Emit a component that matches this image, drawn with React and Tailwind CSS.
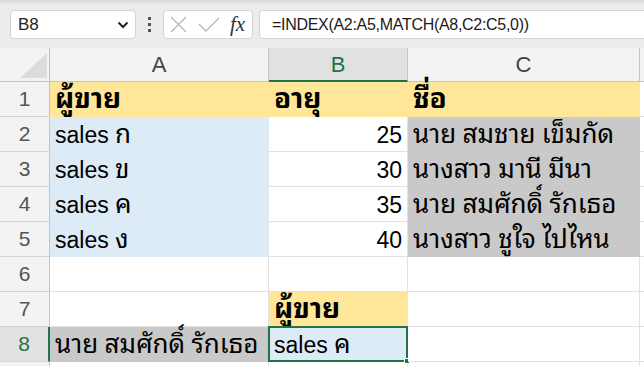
import React from "react";

const FONT = {
  fontFamily:
    '"Liberation Sans", "Noto Sans Thai Looped", Tahoma, Loma, Garuda, "Noto Serif Thai", "Noto Sans Thai", "Noto Sans", sans-serif',
};

const fills = {
  yellow: "bg-[#ffe699] border-[#ffe699]",
  blue: "bg-[#ddebf7] border-[#ddebf7]",
  gray: "bg-[#c9c9c9] border-[#c9c9c9]",
  none: "bg-white border-[#e1e1e1]",
};

const rows = [
  [
    { text: "ผู้ขาย", fill: "yellow", bold: true },
    { text: "อายุ", fill: "yellow", bold: true },
    { text: "ชื่อ", fill: "yellow", bold: true },
  ],
  [
    { text: "sales ก", fill: "blue" },
    { text: "25", right: true },
    { text: "นาย สมชาย เข็มกัด", fill: "gray" },
  ],
  [
    { text: "sales ข", fill: "blue" },
    { text: "30", right: true },
    { text: "นางสาว มานี มีนา", fill: "gray" },
  ],
  [
    { text: "sales ค", fill: "blue" },
    { text: "35", right: true },
    { text: "นาย สมศักดิ์ รักเธอ", fill: "gray" },
  ],
  [
    { text: "sales ง", fill: "blue" },
    { text: "40", right: true },
    { text: "นางสาว ชูใจ ไปไหน", fill: "gray" },
  ],
  [{}, {}, {}],
  [{}, { text: "ผู้ขาย", fill: "yellow", bold: true }, {}],
  [
    { text: "นาย สมศักดิ์ รักเธอ", fill: "gray" },
    { text: "sales ค", fill: "blue", selected: true },
    {},
  ],
];

// Thai runs get a slightly bigger size so they match Excel's Tahoma rendering
function splitThai(text, bold) {
  if (!text) return null;
  return text.split(/([\u0E00-\u0E7F]+)/).map((part, k) =>
    /[\u0E00-\u0E7F]/.test(part) ? (
      <span key={k} className={bold ? "text-[28px] leading-[26px]" : "text-[26px] leading-[26px]"}>
        {part}
      </span>
    ) : (
      part
    )
  );
}

function Cell({ cell }) {
  const fill = fills[cell.fill || "none"];
  return (
    <div
      className={`relative flex items-end border-r border-b px-[5px] pb-[3px] text-[23px] leading-[26px] text-black whitespace-nowrap ${fill} ${
        cell.right ? "justify-end" : "justify-start"
      } ${cell.bold ? "font-bold" : "font-normal"}`}
    >
      <span>{splitThai(cell.text, cell.bold)}</span>
      {cell.selected && (
        <>
          <div className="absolute -left-px -top-px -right-px -bottom-px border-2 border-[#217346]" />
          <div className="absolute -right-[3px] -bottom-[3px] h-[6px] w-[6px] bg-[#217346] border border-white" />
        </>
      )}
    </div>
  );
}

function Toolbar() {
  return (
    <div className="flex h-[44px] items-start pt-[6px] pl-[10px] bg-[#ececec]">
      <div className="flex h-[29px] w-[126px] items-center justify-between rounded-[4px] border border-[#d4d4d4] bg-white pl-[7px] pr-[6px]">
        <span className="text-[17px] text-[#222]">B8</span>
        <svg width="12" height="8" viewBox="0 0 12 8">
          <path d="M1.5 1.5 L6 6 L10.5 1.5" fill="none" stroke="#222" strokeWidth="2" />
        </svg>
      </div>
      <div className="flex h-[29px] w-[27px] flex-col items-center justify-center gap-[3px]">
        <span className="h-[3px] w-[3px] bg-[#555]" />
        <span className="h-[3px] w-[3px] bg-[#555]" />
        <span className="h-[3px] w-[3px] bg-[#555]" />
      </div>
      <div className="flex h-[29px] w-[90px] items-center rounded-[4px] border border-[#d4d4d4] bg-white pl-[6px]">
        <svg width="17" height="17" viewBox="0 0 17 17">
          <path d="M1 1 L16 16 M16 1 L1 16" stroke="#b8b8b8" strokeWidth="1.4" />
        </svg>
        <svg className="ml-[11px]" width="22" height="15" viewBox="0 0 22 15">
          <path d="M1 7 L8 14 L21 1" fill="none" stroke="#b8b8b8" strokeWidth="1.4" />
        </svg>
        <span
          className="ml-[10px] text-[21px] italic leading-none text-[#333]"
          style={{ fontFamily: '"Liberation Serif", serif' }}
        >
          fx
        </span>
      </div>
      <div className="ml-[6px] flex h-[29px] flex-1 items-center rounded-l-[4px] border border-r-0 border-[#d4d4d4] bg-white pl-[12px]">
        <span className="text-[16px] tracking-[-0.3px] text-[#1b1b1b]">
          =INDEX(A2:A5,MATCH(A8,C2:C5,0))
        </span>
      </div>
    </div>
  );
}

export default function App() {
  const cols = ["A", "B", "C"];
  return (
    <div className="w-[644px] h-[366px] overflow-hidden bg-[#ececec]" style={FONT}>
      <div className="h-[4px] bg-gradient-to-b from-[#d6d6d6] to-[#e6e6e6]" />
      <Toolbar />
      <div className="grid grid-cols-[50px_219px_139px_232px_20px] grid-rows-[34px_repeat(8,35px)_20px] bg-white">
        <div className="relative border-r border-b border-[#c4c4c4] bg-[#f3f3f3]">
          <svg className="absolute left-[20px] top-[5px]" width="27" height="25" viewBox="0 0 27 25">
            <path d="M27 0 L27 25 L0 25 Z" fill="#dcdcdc" />
          </svg>
        </div>
        {cols.map((c) => (
          <div
            key={c}
            className={`flex items-center justify-center border-r text-[22px] ${
              c === "B"
                ? "border-b-2 border-r-[#c4c4c4] border-b-[#217346] bg-[#e1e1e1] text-[#217346]"
                : "border-b border-[#c4c4c4] bg-[#f3f3f3] text-[#444]"
            }`}
          >
            {c}
          </div>
        ))}
        <div className="border-b border-[#c4c4c4] bg-[#f3f3f3]" />
        {rows.map((row, i) => (
          <React.Fragment key={i}>
            <div
              className={`flex items-center justify-center border-b text-[21px] ${
                i === 7
                  ? "border-r-2 border-r-[#217346] border-b-[#d4d4d4] bg-[#e1e1e1] text-[#217346]"
                  : "border-r border-r-[#c4c4c4] border-b-[#d4d4d4] bg-[#f3f3f3] text-[#555]"
              }`}
            >
              {i + 1}
            </div>
            {row.map((cell, j) => (
              <Cell key={j} cell={cell} />
            ))}
            <div className="border-b border-[#e1e1e1] bg-white" />
          </React.Fragment>
        ))}
        <div className="border-r border-[#c4c4c4] bg-[#f3f3f3]" />
        <div className="border-r border-[#e1e1e1]" />
        <div className="border-r border-[#e1e1e1]" />
        <div className="border-r border-[#e1e1e1]" />
        <div />
      </div>
    </div>
  );
}
